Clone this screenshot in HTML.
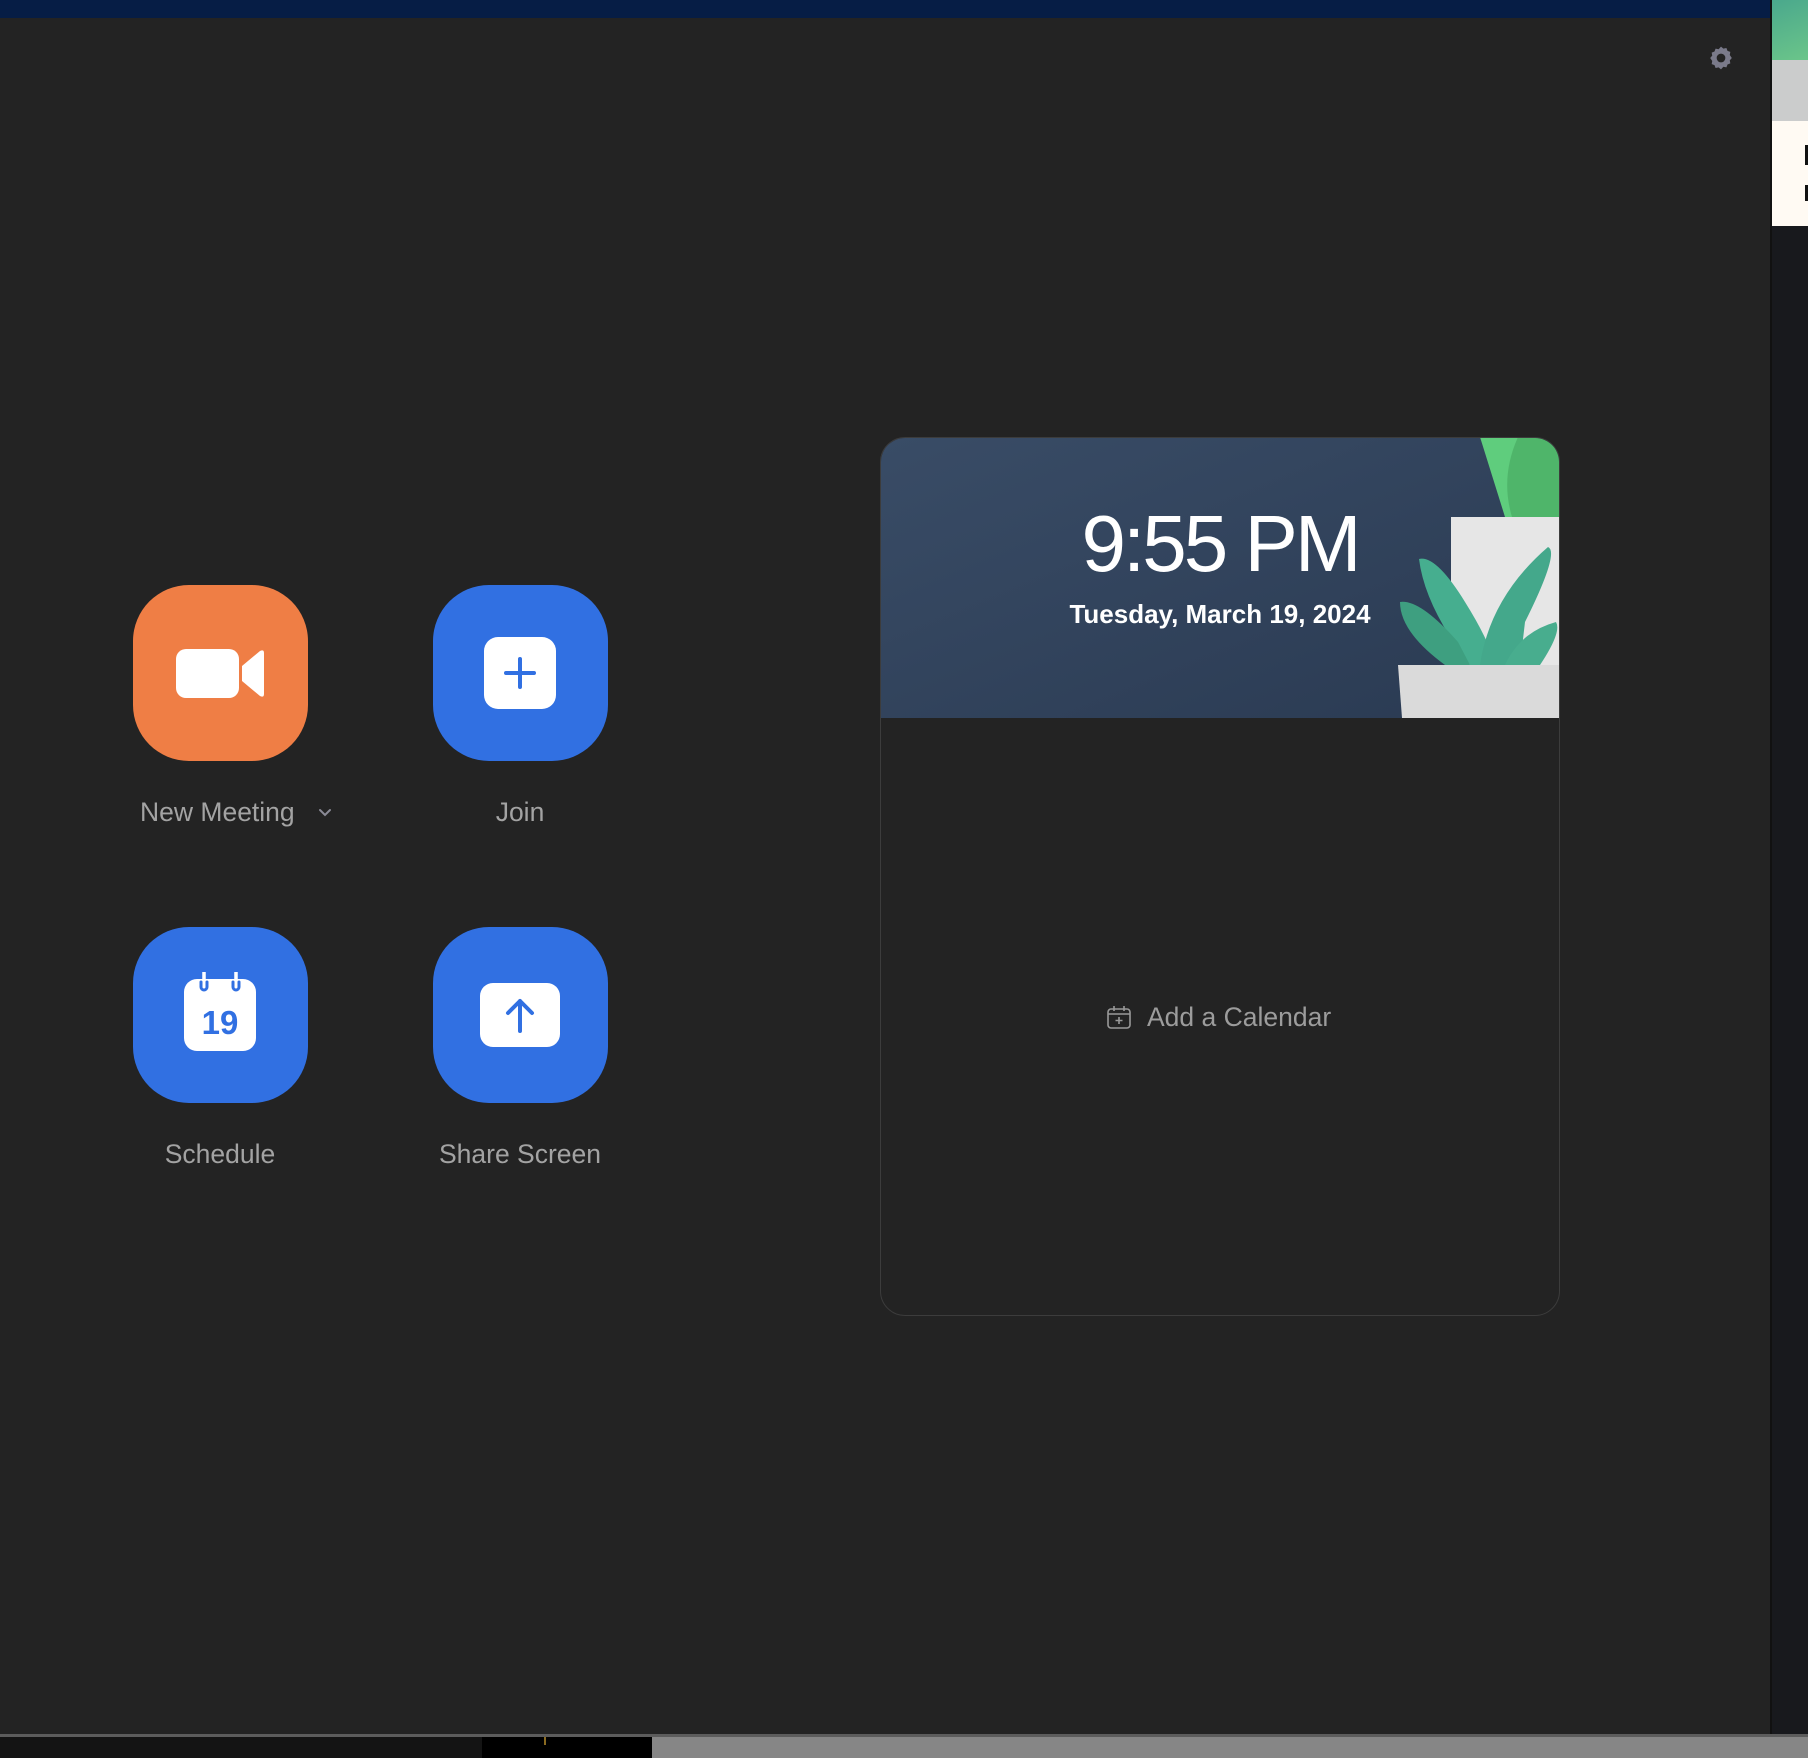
<!DOCTYPE html>
<html><head><meta charset="utf-8"><style>
*{margin:0;padding:0;box-sizing:border-box}
body{width:1808px;height:1758px;background:#232323;position:relative;overflow:hidden;font-family:"Liberation Sans",sans-serif}
.abs{position:absolute}
.tile{position:absolute;width:175px;height:176px;border-radius:56px}
.lbl{position:absolute;color:#a3a3a3;font-size:26.5px;text-align:center;width:300px}
</style></head><body>
<div class="abs" style="left:0;top:0;width:1770px;height:18px;background:#061d45"></div>
<div class="abs" style="left:1770px;top:0;width:2px;height:1734px;background:#111"></div>
<div class="abs" style="left:1772px;top:0;width:36px;height:60px;background:linear-gradient(160deg,#4aa88c,#6bc58a)"></div>
<div class="abs" style="left:1772px;top:60px;width:36px;height:61px;background:#cbcccc"></div>
<div class="abs" style="left:1772px;top:121px;width:36px;height:105px;background:#fffaf3"></div>
<div class="abs" style="left:1805px;top:145px;width:3px;height:20px;background:#111"></div>
<div class="abs" style="left:1805px;top:185px;width:3px;height:16px;background:#111"></div>
<div class="abs" style="left:1772px;top:226px;width:36px;height:1508px;background:#18191d"></div>
<svg class="abs" style="left:1708px;top:45px" width="26" height="26" viewBox="0 0 24 24"><path fill="#7a7a8a" d="M12 1.5l2.2 1.8 2.8-.5 1 2.6 2.6 1-.5 2.8L22 12l-1.9 2.2.5 2.8-2.6 1-1 2.6-2.8-.5L12 22.5l-2.2-1.8-2.8.5-1-2.6-2.6-1 .5-2.8L2 12l1.9-2.2-.5-2.8 2.6-1 1-2.6 2.8.5z"/><circle cx="12" cy="12" r="4" fill="#232323"/></svg>
<div class="abs" style="left:0;top:1734px;width:1808px;height:3px;background:#5c5c5c"></div>
<div class="abs" style="left:0;top:1737px;width:482px;height:21px;background:#141414"></div>
<div class="abs" style="left:482px;top:1737px;width:170px;height:21px;background:#000"></div>
<div class="abs" style="left:544px;top:1737px;width:2px;height:8px;background:#8a6a20"></div>
<div class="abs" style="left:652px;top:1737px;width:1156px;height:21px;background:#868686"></div>

<div class="tile" style="left:133px;top:585px;background:#ef7e45"></div>
<svg class="abs" style="left:176px;top:649px" width="90" height="50"><rect x="0" y="0" width="63" height="49" rx="10" fill="#fff"/><path d="M66 17 L84 2 Q88 0 88 4 V45 Q88 49 84 47 L66 32 Z" fill="#fff"/></svg>
<div class="tile" style="left:433px;top:585px;background:#3170e2"></div>
<svg class="abs" style="left:484px;top:637px" width="72" height="72"><rect width="72" height="72" rx="14" fill="#fff"/><path d="M36 22V50M22 36H50" stroke="#3170e2" stroke-width="4" stroke-linecap="round"/></svg>
<div class="tile" style="left:133px;top:927px;background:#3170e2"></div>
<svg class="abs" style="left:184px;top:972px" width="72" height="80"><rect y="7" width="72" height="72" rx="13" fill="#fff"/><path d="M20 0V16M52 0V16" stroke="#fff" stroke-width="3.5" stroke-linecap="round"/><path d="M17 10V15a3 3 0 006 0V10M49 10V15a3 3 0 006 0V10" stroke="#3170e2" stroke-width="3" fill="none" stroke-linecap="round"/><text x="36" y="62" text-anchor="middle" font-family="Liberation Sans" font-size="33" font-weight="bold" fill="#3170e2">19</text></svg>
<div class="tile" style="left:433px;top:927px;background:#3170e2"></div>
<svg class="abs" style="left:480px;top:983px" width="80" height="64"><rect width="80" height="64" rx="13" fill="#fff"/><path d="M40 48V18M28 30L40 18 52 30" stroke="#3170e2" stroke-width="4" fill="none" stroke-linecap="round" stroke-linejoin="round"/></svg>

<div class="abs" style="left:140px;top:797px;color:#a3a3a3;font-size:26.5px">New Meeting</div>
<svg class="abs" style="left:318px;top:808px" width="14" height="10"><path d="M2 2L7 7 12 2" stroke="#8a8a96" stroke-width="2" fill="none" stroke-linecap="round"/></svg>
<div class="lbl" style="left:370px;top:797px">Join</div>
<div class="lbl" style="left:70px;top:1139px">Schedule</div>
<div class="lbl" style="left:370px;top:1139px">Share Screen</div>

<div class="abs" style="left:880px;top:437px;width:680px;height:879px;border:1px solid #3c3c3c;border-radius:25px;overflow:hidden">
<svg class="abs" style="left:-1px;top:-1px" width="680" height="281"><defs><linearGradient id="g" x1="0" y1="0" x2="1" y2="1"><stop offset="0" stop-color="#394c66"/><stop offset="1" stop-color="#2a3a52"/></linearGradient></defs>
<rect width="680" height="281" fill="url(#g)"/>
<path d="M600 0H643L632 80H625Z" fill="#5fcd7d"/><path d="M638 0H680V80H632Q620 40 638 0Z" fill="#4fb56a"/>
<rect x="571" y="80" width="109" height="200" fill="#e6e6e6"/>
<path d="M590 228Q545 170 539 122Q556 118 585 165Q610 205 615 228Z" fill="#46ae8f"/>
<path d="M600 228Q610 160 668 110Q680 115 645 185L640 228Z" fill="#44a88b"/>
<path d="M565 228Q520 195 520 165Q540 162 578 205L590 228Z" fill="#3e9f80"/>
<path d="M625 228Q640 195 676 185Q682 195 660 228Z" fill="#48ad8e"/>
<path d="M518 228H680V281H522Z" fill="#dadada"/>
<text x="340" y="134" text-anchor="middle" font-family="Liberation Sans" font-size="80" fill="#fff" letter-spacing="-3">9:55 PM</text>
<text x="340" y="186" text-anchor="middle" font-family="Liberation Sans" font-size="26" font-weight="bold" fill="#fff">Tuesday, March 19, 2024</text>
</svg>
</div>
<svg class="abs" style="left:1107px;top:1005px" width="24" height="24" viewBox="0 0 24 24" fill="none" stroke="#999" stroke-width="1.6"><rect x="1" y="4" width="22" height="19" rx="3"/><path d="M1 9H23M7 1V6M17 1V6M12 12V19M8.5 15.5H15.5"/></svg>
<div class="abs" style="left:1147px;top:1002px;color:#9c9c9c;font-size:26.5px">Add a Calendar</div>
</body></html>
